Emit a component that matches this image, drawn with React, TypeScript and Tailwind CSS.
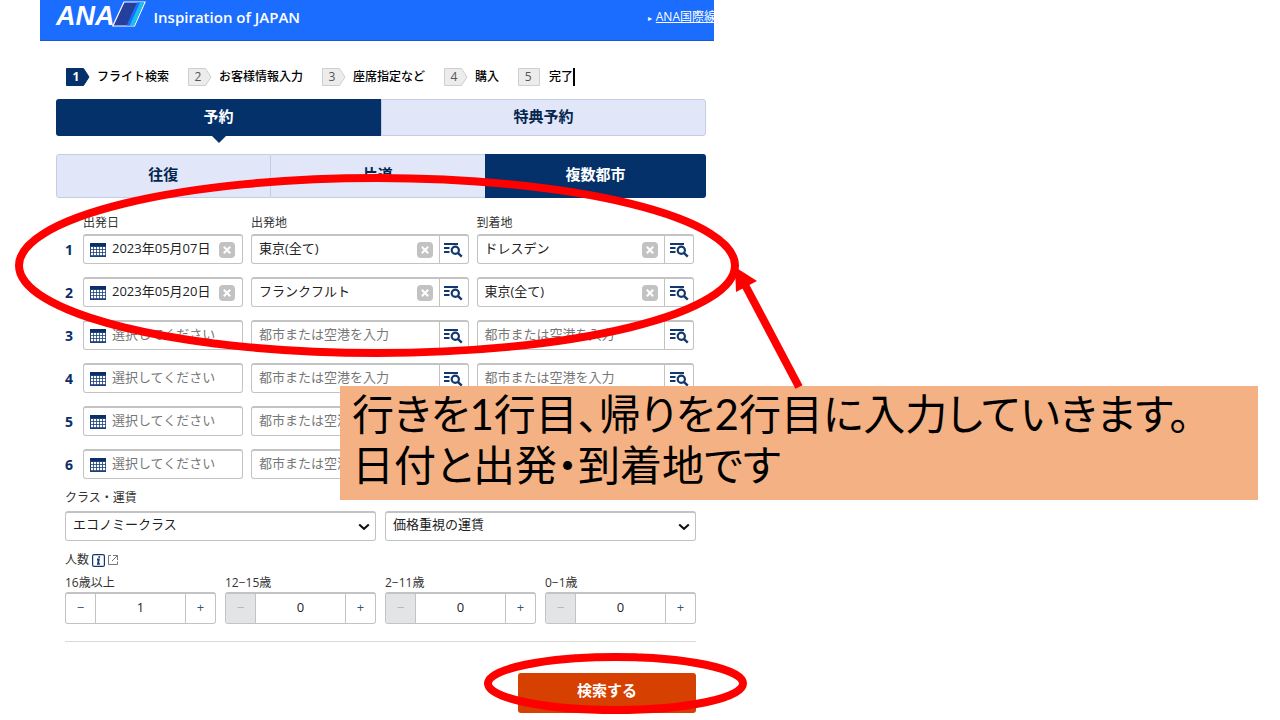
import React, { useState } from 'react';

const STEPS = ['フライト検索', 'お客様情報入力', '座席指定など', '購入', '完了'];

const LEGS = [
  { date: '2023年05月07日', from: '東京(全て)', to: 'ドレスデン' },
  { date: '2023年05月20日', from: 'フランクフルト', to: '東京(全て)' },
  { date: '', from: '', to: '' },
  { date: '', from: '', to: '' },
  { date: '', from: '', to: '' },
  { date: '', from: '', to: '' },
];

const PASSENGERS = [
  { label: '16歳以上', count: 1 },
  { label: '12−15歳', count: 0 },
  { label: '2−11歳', count: 0 },
  { label: '0−1歳', count: 0 },
];

const FIELD = 'rounded-[3px] border border-t-2 border-[#c3c3c3] bg-white';

function CalendarIcon() {
  return (
    <svg width="16" height="14" viewBox="0 0 16 14" className="shrink-0" aria-hidden="true">
      <rect width="16" height="14" fill="#1d4278" />
      <rect width="16" height="3" fill="#0b2f66" />
      {[4, 7, 10].map((y) =>
        [1, 4, 7, 10, 13].map((x) => <rect key={`${x}-${y}`} x={x} y={y} width="2.2" height="2.2" fill="#fff" />)
      )}
    </svg>
  );
}

function SearchListIcon() {
  return (
    <svg width="20" height="16" viewBox="0 0 20 16" fill="none" stroke="#12386f" strokeWidth="2" aria-hidden="true">
      <path d="M1 2h14M1 6h5.5M1 10h5.5" />
      <circle cx="12.3" cy="8.2" r="3.6" strokeWidth="2.2" />
      <path d="M14.8 10.8l4 3.8" strokeWidth="2.4" />
    </svg>
  );
}

function ClearButton({ onClick }: { onClick: () => void }) {
  return (
    <button
      type="button"
      aria-label="クリア"
      onClick={onClick}
      className="flex h-4 w-4 shrink-0 items-center justify-center rounded-sm bg-[#c2c2c2]"
    >
      <svg width="8" height="8" viewBox="0 0 8 8" stroke="#fff" strokeWidth="2" aria-hidden="true">
        <path d="M0.8 0.8l6.4 6.4M7.2 0.8L0.8 7.2" />
      </svg>
    </button>
  );
}

function Step({ index, label }: { index: number; label: string }) {
  const active = index === 0;
  const last = index === STEPS.length - 1;
  return (
    <li className="flex items-center gap-[7px]">
      <span className="relative flex h-[18px] w-6 items-center">
        <svg width="24" height="18" viewBox="0 0 24 18" className="absolute inset-0" aria-hidden="true">
          <path
            d={last ? 'M.5.5h21v17H.5z' : 'M.5.5h17L23 9l-5.5 8.5H.5z'}
            fill={active ? '#04316a' : '#ececec'}
            stroke={active ? '#04316a' : '#cfcfcf'}
          />
        </svg>
        <span className={`relative w-5 text-center text-xs ${active ? 'font-bold text-white' : 'text-[#555]'}`}>
          {index + 1}
        </span>
      </span>
      <span className={`text-xs leading-[18px] font-medium text-black ${last ? 'border-r-2 border-black' : ''}`}>
        {label}
      </span>
    </li>
  );
}

function CityField({ label, initial }: { label: string; initial: string }) {
  const [value, setValue] = useState(initial);
  return (
    <div className={`flex h-[30px] min-w-0 ${FIELD}`}>
      <div className="flex min-w-0 flex-1 items-center pr-[6px] pl-[7px]">
        <input
          aria-label={label}
          value={value}
          placeholder="都市または空港を入力"
          onChange={(e) => setValue(e.target.value)}
          className="w-full min-w-0 flex-1 pb-[3px] text-[13px] leading-5 text-[#222] outline-none placeholder:text-[#777]"
        />
        {value && <ClearButton onClick={() => setValue('')} />}
      </div>
      <button
        type="button"
        aria-label={`${label}を一覧から選択`}
        className="flex w-[29px] items-center justify-center border-l border-[#c3c3c3] pr-px"
      >
        <SearchListIcon />
      </button>
    </div>
  );
}

function DateField({ label, initial }: { label: string; initial: string }) {
  const [value, setValue] = useState(initial);
  return (
    <div className={`flex h-[30px] min-w-0 items-center pr-[7px] pl-[6px] ${FIELD}`}>
      <CalendarIcon />
      <input
        aria-label={label}
        value={value}
        placeholder="選択してください"
        onChange={(e) => setValue(e.target.value)}
        className="ml-[6px] w-full min-w-0 flex-1 pb-[3px] text-[13px] leading-5 text-[#222] outline-none placeholder:text-[#777]"
      />
      {value && <ClearButton onClick={() => setValue('')} />}
    </div>
  );
}

function SelectBox({ label, options }: { label: string; options: string[] }) {
  return (
    <div className="relative">
      <select
        aria-label={label}
        className={`block h-[30px] w-full appearance-none pb-[5px] pl-[7px] text-[13px] leading-5 text-[#222] ${FIELD}`}
      >
        {options.map((o) => (
          <option key={o}>{o}</option>
        ))}
      </select>
      <svg
        width="12"
        height="8"
        viewBox="0 0 12 8"
        fill="none"
        stroke="#111"
        strokeWidth="2"
        className="pointer-events-none absolute top-3 right-1.5"
        aria-hidden="true"
      >
        <path d="M1.2 1.4l4.8 4.4 4.8-4.4" />
      </svg>
    </div>
  );
}

function Stepper({ label, initial }: { label: string; initial: number }) {
  const [count, setCount] = useState(initial);
  return (
    <div>
      <label htmlFor={label} className="block text-xs leading-[18px] text-[#333]">
        {label}
      </label>
      <div className={`flex h-8 overflow-hidden ${FIELD}`}>
        <button
          type="button"
          aria-label="減らす"
          disabled={count === 0}
          onClick={() => setCount(count - 1)}
          className="w-[30px] border-r border-[#c3c3c3] pb-0.5 text-[13px] text-[#35557f] disabled:bg-[#e3e4e6] disabled:text-[#b5b5b5]"
        >
          −
        </button>
        <input
          id={label}
          value={count}
          readOnly
          className="w-full min-w-0 flex-1 pb-0.5 text-center text-[13px] text-[#222] outline-none"
        />
        <button
          type="button"
          aria-label="増やす"
          onClick={() => setCount(count + 1)}
          className="w-[30px] border-l border-[#c3c3c3] pb-0.5 text-[13px] text-[#35557f]"
        >
          +
        </button>
      </div>
    </div>
  );
}

function Header() {
  return (
    <header className="flex h-[41px] items-start overflow-hidden border-b border-[#1659d6] bg-[#1a6dff] pl-4 text-white">
      <div className="flex items-start">
        <span className="font-['Liberation_Sans'] text-[27px] leading-8 font-bold italic">ANA</span>
        <svg width="34" height="26" viewBox="0 0 34 26" className="-ml-[3px] mt-px" aria-hidden="true">
          <path d="M12 1h21L22.5 25H.8z" fill="#243f9c" stroke="#fff" strokeWidth="1.2" />
          <path d="M25 1.6h3.4L18.2 24.4h-3.6z" fill="#1a6dff" />
          <path d="M28 1.6h4.2L22.1 24.4h-4.4z" fill="#18c0ef" />
        </svg>
      </div>
      <p className="ml-2 font-['Open_Sans'] text-[15px] leading-[34px] font-semibold">Inspiration of JAPAN</p>
      <a href="#international" className="-mr-0.5 ml-auto shrink-0 text-xs leading-[34px] whitespace-nowrap">
        <span className="mr-1 text-[8px]">▸</span>
        <span className="underline">ANA国際線</span>
      </a>
    </header>
  );
}

function Annotations() {
  return (
    <svg
      width="1280"
      height="720"
      viewBox="0 0 1280 720"
      fill="none"
      stroke="#ff0000"
      strokeWidth="8"
      className="pointer-events-none absolute top-0 left-0"
      aria-hidden="true"
    >
      <ellipse cx="377" cy="265.5" rx="358" ry="87.5" />
      <ellipse cx="615.5" cy="683.5" rx="127.5" ry="26.5" />
      <path d="M744 283l55 104" />
      <path d="M735 267l22 14-21 11z" fill="#ff0000" stroke="none" />
    </svg>
  );
}

export default function App() {
  return (
    <div className="relative min-h-screen overflow-hidden bg-white pl-10 font-['Open_Sans','Noto_Sans_CJK_JP',sans-serif]">
      <main className="max-w-[674px]">
        <Header />

        <div className="pr-2 pl-4">
          <ol className="mt-[27px] flex h-[18px] items-center gap-[19px] pl-[10px] whitespace-nowrap">
            {STEPS.map((label, i) => (
              <Step key={label} index={i} label={label} />
            ))}
          </ol>

          <nav className="mt-[13px] grid h-[37px] grid-cols-2 text-[15px] font-bold">
            <button type="button" className="relative rounded-l-[3px] bg-[#04316a] pb-[3px] text-white">
              予約
              <svg width="14" height="7" viewBox="0 0 14 7" className="absolute top-full left-1/2 -translate-x-1/2">
                <path d="M0 0h14L7 7z" fill="#04316a" />
              </svg>
            </button>
            <button type="button" className="rounded-r-[3px] border border-[#c5cde2] bg-[#e1e7f8] pb-[3px] text-[#04264f]">
              特典予約
            </button>
          </nav>

          <nav className="mt-[18px] grid h-11 grid-cols-[1fr_1fr_221px] text-[15px] font-bold text-[#04264f]">
            <button type="button" className="rounded-l-[3px] border border-[#c5cde2] bg-[#e1e7f8] pb-[3px]">
              往復
            </button>
            <button type="button" className="border-y border-[#c5cde2] bg-[#e1e7f8] pb-[3px]">
              片道
            </button>
            <button type="button" className="rounded-r-[3px] bg-[#04316a] pb-[3px] text-white">
              複数都市
            </button>
          </nav>

          <form className="pr-[10px] pl-[9px]" onSubmit={(e) => e.preventDefault()}>
            <div className="mt-4 grid grid-cols-[160px_1fr_1fr] gap-x-2 pr-[2px] pl-[18px] text-xs leading-[18px] text-[#333]">
              <span>出発日</span>
              <span>出発地</span>
              <span>到着地</span>
            </div>
            <div className="mt-[2px] grid gap-[13px] pr-[2px]">
              {LEGS.map((leg, i) => (
                <div key={i} className="flex items-center">
                  <span className="w-[18px] pt-0.5 text-sm leading-5 font-bold text-[#0b2f66]">{i + 1}</span>
                  <div className="grid min-w-0 flex-1 grid-cols-[160px_1fr_1fr] gap-x-2">
                    <DateField label={`出発日${i + 1}`} initial={leg.date} />
                    <CityField label={`出発地${i + 1}`} initial={leg.from} />
                    <CityField label={`到着地${i + 1}`} initial={leg.to} />
                  </div>
                </div>
              ))}
            </div>

            <p className="mt-[10px] text-xs leading-[18px] text-[#333]">クラス・運賃</p>
            <div className="mt-1 grid grid-cols-2 gap-[9px]">
              <SelectBox label="クラス" options={['エコノミークラス', 'ビジネスクラス']} />
              <SelectBox label="運賃" options={['価格重視の運賃']} />
            </div>

            <div className="mt-[10px] flex items-center gap-[3px] text-xs leading-[18px] text-[#333]">
              人数
              <svg width="13" height="13" viewBox="0 0 13 13" fill="none" stroke="#12386f" aria-hidden="true">
                <rect x=".6" y=".6" width="11.8" height="11.8" rx="1.5" strokeWidth="1.2" />
                <path d="M7.4 2.3l-.3 1.4M5 5.5h1.8L6 9.8h1.8" strokeWidth="1.8" />
              </svg>
              <svg width="10" height="10" viewBox="0 0 10 10" fill="none" stroke="#777" aria-hidden="true">
                <path d="M3 .5H.5v9h9V6.5M5 .5h4.5V5M9.5.5L4 6" />
              </svg>
            </div>
            <div className="mt-[5px] grid grid-cols-4 gap-[9px]">
              {PASSENGERS.map((p) => (
                <Stepper key={p.label} label={p.label} initial={p.count} />
              ))}
            </div>

            <hr className="mt-[17px] border-[#d9d9d9]" />
            <button
              type="submit"
              className="mt-[31px] ml-auto block h-10 w-[178px] rounded-[3px] bg-[#d64000] pb-[5px] text-[15px] font-bold text-white"
            >
              検索する
            </button>
          </form>
        </div>
      </main>

      <aside className="absolute top-[386px] right-[22px] left-[340px] h-[114px] bg-[#f4b183] pl-3 font-['Lato','Noto_Sans_CJK_JP',sans-serif] text-[42px] leading-[51px] whitespace-nowrap text-black [font-feature-settings:'palt']">
        <p className="mt-[3px]">行きを1行目、帰りを2行目に入力していきます。</p>
        <p>日付と出発・到着地です</p>
      </aside>
      <Annotations />
    </div>
  );
}
